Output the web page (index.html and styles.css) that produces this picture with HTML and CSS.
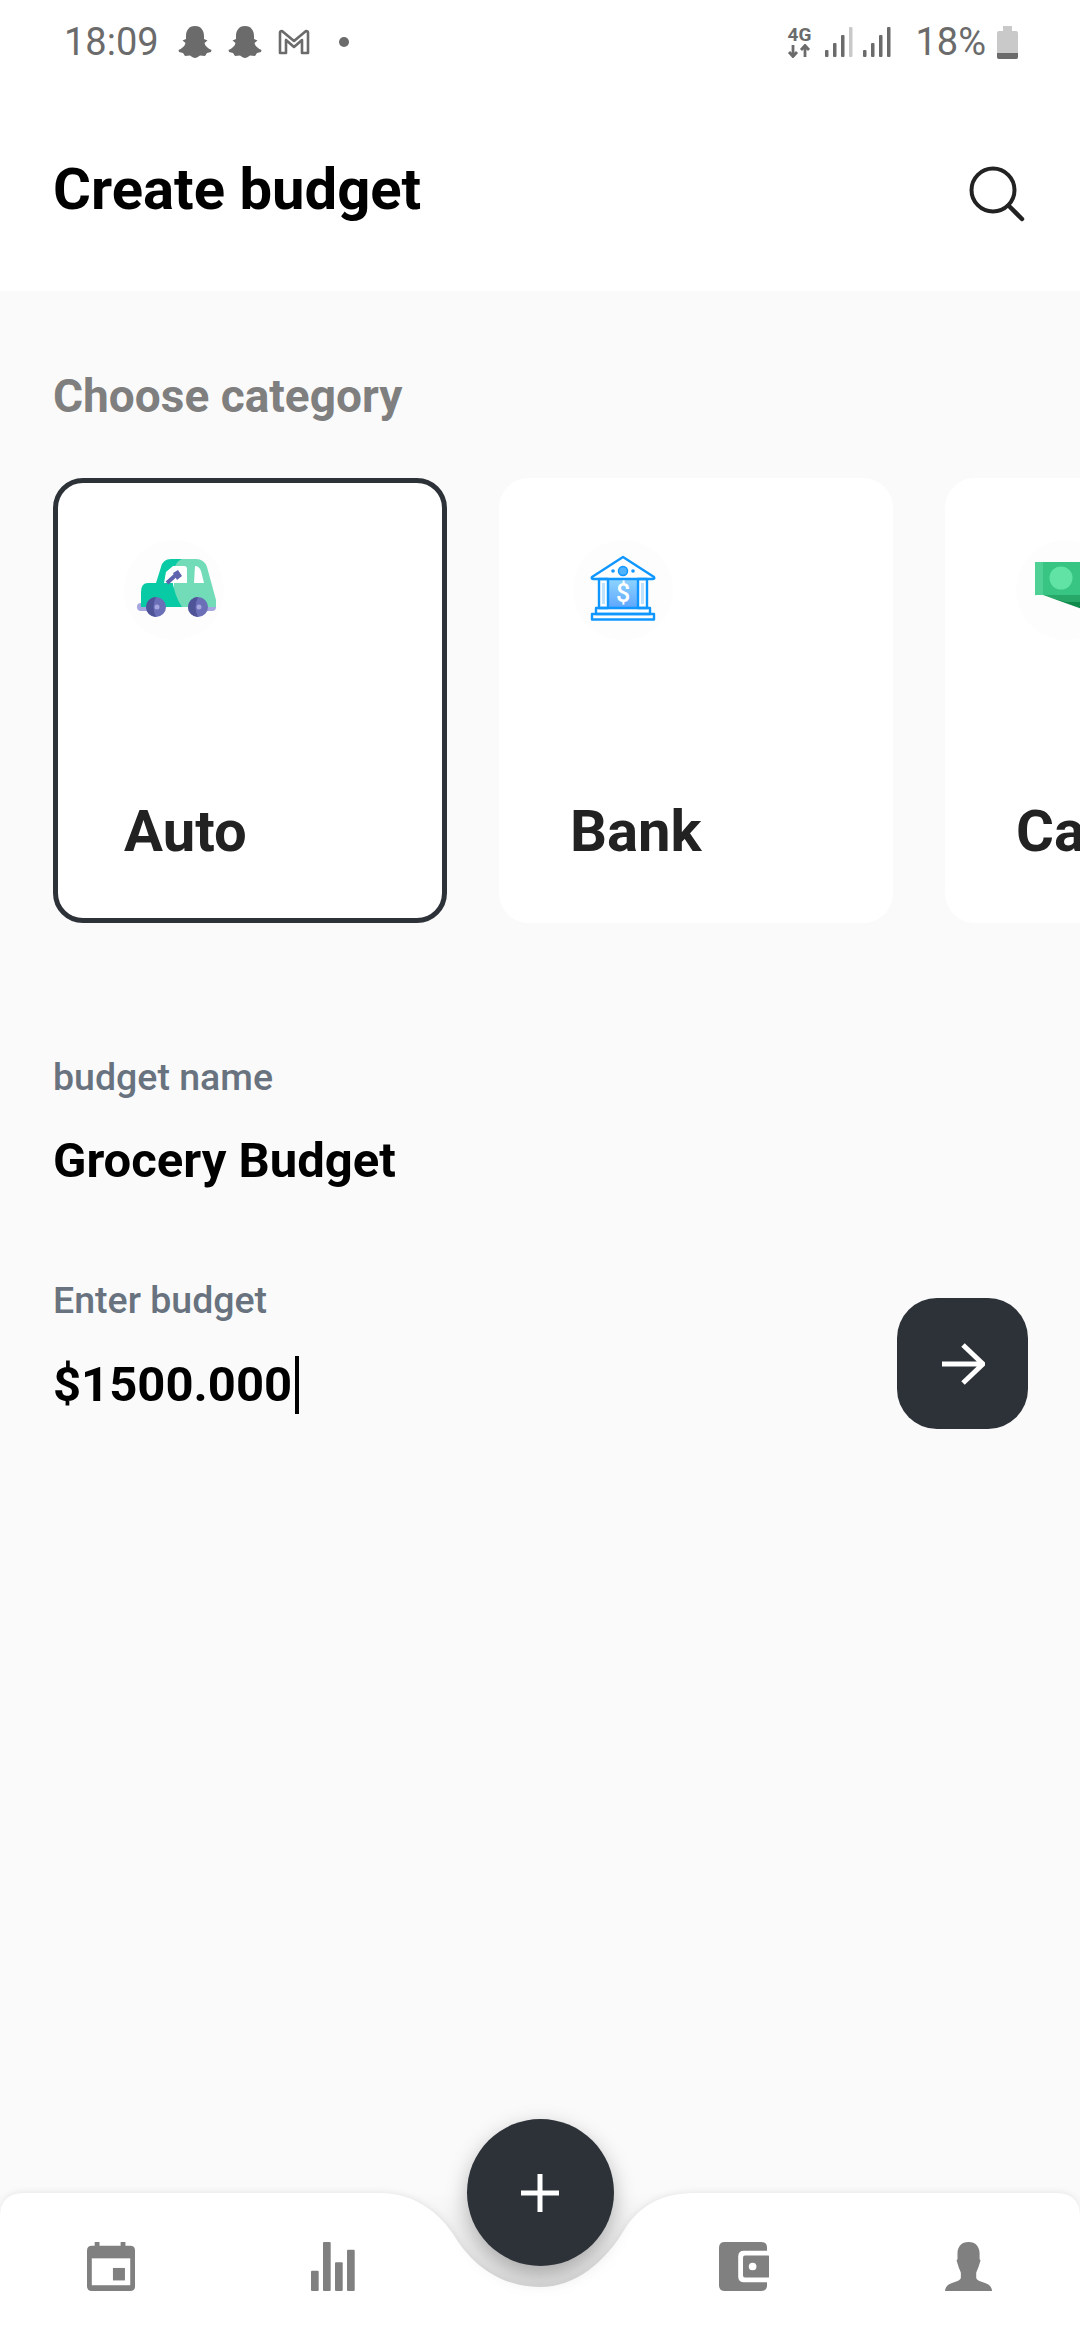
FILE: index.html
```html
<!DOCTYPE html>
<html>
<head>
	<meta charset="utf-8">
	<title>Create budget</title>
	<link rel="stylesheet" href="styles.css">
</head>
<body>
	<div class="page">
		<div class="status">
			<div class="status-left">
				<span class="time">18:09</span>
				<svg class="snap" viewBox="0 0 34 34"><path d="M17 1C10.500 1 8 6 8 11L8 14 4.500 15.500 7.500 18C7 21 4 23.500 0.500 25L1 27 5 28 7 31 12 30.500C14 32 15.500 33 17 33S20 32 22 30.500L27 31 29 28 33 27 33.500 25C30 23.500 27 21 26.500 18L29.500 15.500 26 14 26 11C26 6 23.500 1 17 1Z"/></svg>
				<svg class="snap" viewBox="0 0 34 34"><path d="M17 1C10.500 1 8 6 8 11L8 14 4.500 15.500 7.500 18C7 21 4 23.500 0.500 25L1 27 5 28 7 31 12 30.500C14 32 15.500 33 17 33S20 32 22 30.500L27 31 29 28 33 27 33.500 25C30 23.500 27 21 26.500 18L29.500 15.500 26 14 26 11C26 6 23.500 1 17 1Z"/></svg>
				<svg class="gmail" viewBox="0 0 32 26"><path d="M2 24V4Q2 2 4 2L16 12 28 2Q30 2 30 4V24H24V11L16 18 8 11V24Z" fill="none" stroke="#6b6b6b" stroke-width="2.600" stroke-linejoin="round"/></svg>
				<span class="dot"></span>
			</div>
			<div class="status-right">
				<div class="net">
					<span class="net-label">4G</span>
					<svg class="net-arrows" viewBox="0 0 24 14"><path d="M6 1V12M2 8L6 12.500 10 8M18 13V2M14 6L18 1.500 22 6" fill="none" stroke="#6b6b6b" stroke-width="2.800"/></svg>
				</div>
				<svg class="signal" viewBox="0 0 28 30"><rect x="0" y="23" width="3.500" height="7" rx="1"/><rect x="8" y="16" width="3.500" height="14" rx="1"/><rect x="16" y="8" width="3.500" height="22" rx="1"/><rect class="off" x="24" y="0" width="3.500" height="30" rx="1"/></svg>
				<svg class="signal" viewBox="0 0 28 30"><rect x="0" y="23" width="3.500" height="7" rx="1"/><rect x="8" y="16" width="3.500" height="14" rx="1"/><rect x="16" y="8" width="3.500" height="22" rx="1"/><rect x="24" y="0" width="3.500" height="30" rx="1"/></svg>
				<span class="percent">18%</span>
				<svg class="battery" viewBox="0 0 21 33"><path d="M6 0H15V5H19Q21 5 21 7V31Q21 33 19 33H2Q0 33 0 31V7Q0 5 2 5H6Z" fill="#c9c9c9"/><path d="M0 27H21V31Q21 33 19 33H2Q0 33 0 31Z" fill="#6b6b6b"/></svg>
			</div>
		</div>

		<div class="header">
			<h1>Create budget</h1>
			<svg class="search" viewBox="0 0 56 56"><circle cx="24" cy="24" r="21.500" fill="none" stroke="#222" stroke-width="4"/><path d="M40 40L53 53" stroke="#222" stroke-width="4.500" stroke-linecap="round"/></svg>
		</div>

		<div class="main">
			<h2>Choose category</h2>
			<div class="cards">
				<div class="card active">
					<div class="pic">
						<svg viewBox="0 0 100 100">
							<rect x="13" y="63" width="12" height="8" rx="4" fill="#a5a6e0"/>
							<rect x="80" y="63" width="12" height="8" rx="4" fill="#a5a6e0"/>
							<path d="M50 19H72Q80 19 83 27L92 60V67H50Z" fill="#72dcb8"/>
							<path d="M58 19Q50 22 48 38Q50 55 58 67H17V52Q17 43 24 43H32L37 27Q39 19 47 19Z" fill="#08cba6"/>
							<path d="M49 26H60Q63 26 63 29V43H40L42 32Z" fill="#fff"/>
							<path d="M71 26Q75 26 77 31L80 43H70Z" fill="#fff"/>
							<path d="M43 43L54 33" stroke="#5f63ae" stroke-width="4"/>
							<path d="M49 33L54 30 58 36 53 40Z" fill="#5f63ae"/>
							<circle cx="32" cy="67" r="10" fill="#6a6fb8"/>
							<path d="M32 57A10 10 0 0 0 32 77Q27 67 32 57Z" fill="#4f5499"/>
							<circle cx="33" cy="67" r="2.500" fill="#a5a6e0"/>
							<circle cx="74" cy="67" r="10" fill="#6a6fb8"/>
							<path d="M74 57A10 10 0 0 0 74 77Q69 67 74 57Z" fill="#4f5499"/>
							<circle cx="75" cy="67" r="2.500" fill="#a5a6e0"/>
						</svg>
					</div>
					<span class="card-name">Auto</span>
				</div>
				<div class="card">
					<div class="pic bank">
						<svg viewBox="0 0 100 100">
							<defs>
								<linearGradient id="bankfill" x1="0" y1="0" x2="0" y2="1"><stop offset="0" stop-color="#8ed4ff"/><stop offset="1" stop-color="#5ea6ff"/></linearGradient>
							</defs>
							<rect x="35" y="39" width="30" height="29" fill="url(#bankfill)"/>
							<g fill="none" stroke="#0f97ff" stroke-width="2.400" stroke-linejoin="round">
								<path d="M50 17L81 37Q82 39 80 39H20Q18 39 19 37Z"/>
								<rect x="26" y="39" width="9" height="29"/>
								<rect x="65" y="39" width="9" height="29"/>
								<path d="M30.500 43V64M69.500 43V64" stroke="#bfe3ff" stroke-width="3"/>
								<rect x="23" y="68" width="54" height="6"/>
								<rect x="19" y="74" width="62" height="5.500"/>
							</g>
							<circle cx="50" cy="31" r="4.500" fill="#4fb2ff" stroke="#0f97ff" stroke-width="1.500"/>
							<circle cx="40" cy="31" r="1.800" fill="#0f97ff"/>
							<circle cx="60" cy="31" r="1.800" fill="#0f97ff"/>
							<text class="bank-sign" x="50" y="62" text-anchor="middle">$</text>
						</svg>
					</div>
					<span class="card-name">Bank</span>
				</div>
				<div class="card">
					<div class="pic">
						<svg viewBox="0 0 100 100">
							<path d="M19 22H100V72L65 72 19 55Z" fill="#38c584"/>
							<rect x="19" y="22" width="8" height="33" fill="#4fd195"/>
							<circle cx="45" cy="38" r="11.500" fill="#62e3a6"/>
							<path d="M27 55H100V63H50Z" fill="#27a868"/>
							<path d="M27 56L50 62H100V80H88Z" fill="#0f8a4b"/>
							<path d="M19 55L27 55 100 81V100H90Z" fill="#fdfdfd"/>
						</svg>
					</div>
					<span class="card-name">Cash</span>
				</div>
			</div>

			<div class="field">
				<span class="field-label">budget name</span>
				<span class="field-value">Grocery Budget</span>
			</div>

			<div class="field-row">
				<div class="field">
					<span class="field-label">Enter budget</span>
					<span class="field-value">$1500.000<i class="caret"></i></span>
				</div>
				<div class="next">
					<svg viewBox="0 0 44 42"><path d="M1 21H41M22 2L42 21 22 40" fill="none" stroke="#fff" stroke-width="5"/></svg>
				</div>
			</div>
		</div>

		<div class="nav">
			<svg class="nav-bg" viewBox="0 0 1080 147">
				<defs>
					<linearGradient id="notch" x1="0" y1="0" x2="0" y2="1"><stop offset="0" stop-color="#fafafa"/><stop offset="1" stop-color="#dfdfdf"/></linearGradient>
				</defs>
				<rect x="380" y="0" width="316" height="95" fill="url(#notch)"/>
				<path class="nav-shape" d="M0 24Q0 0 24 0H379C415 0 440 20 455 44C475 76 505 94 540 94C575 94 605 70 626 34C640 14 660 0 695 0H1056Q1080 0 1080 24V147H0Z" fill="#fff"/>
			</svg>
			<div class="nav-item">
				<svg class="nav-icon" viewBox="0 0 50 51"><path d="M8 0H13V4H35V0H40V4H45Q50 4 50 9V46Q50 51 45 51H5Q0 51 0 46V9Q0 4 5 4H8Z"/><rect x="5" y="17" width="40" height="28" fill="#fff"/><rect x="27" y="27" width="12.500" height="13"/></svg>
			</div>
			<div class="nav-item">
				<svg class="nav-icon" viewBox="0 0 46 51"><rect x="0" y="30" width="8" height="21" rx="1"/><rect x="12.500" y="0" width="8" height="51" rx="1"/><rect x="25" y="21" width="8" height="30" rx="1"/><rect x="37.500" y="8" width="8" height="43" rx="1"/></svg>
			</div>
			<div class="nav-gap"></div>
			<div class="nav-item wallet">
				<svg class="nav-icon" viewBox="0 0 53 51"><path d="M6 0H44Q50 0 50 6V45Q50 51 44 51H6Q0 51 0 45V6Q0 0 6 0Z"/><path d="M26 9H53V42H26Q20 42 20 36V15Q20 9 26 9Z" fill="#fff"/><rect x="25" y="14" width="28" height="23" rx="2"/><circle cx="35" cy="25.500" r="4" fill="#fff"/></svg>
			</div>
			<div class="nav-item">
				<svg class="nav-icon" viewBox="0 0 49 51"><path d="M24.500 0C17 0 13 5 13 12V18L12 19 13.500 24C14.500 28 16 30 16.500 32V37C16.500 40 12 41 8 42.500C3 44 0.500 46.500 0 51H49C48.500 46.500 46 44 41 42.500C37 41 32.500 40 32.500 37V32C33 30 34.500 28 35.500 24L37 19 36 18V12C36 5 32 0 24.500 0Z"/></svg>
			</div>
			<div class="fab">
				<svg viewBox="0 0 40 40"><path d="M20 1V39M1 20H39" stroke="#fff" stroke-width="5"/></svg>
			</div>
		</div>
	</div>
</body>
</html>
```

FILE: styles.css
```css
*{
	box-sizing: border-box;
}
html,body{
	margin: 0;
	padding: 0;
}
body{
	font-family: Roboto, "Liberation Sans", sans-serif;
	background: #fff;
}
svg{
	display: block;
}
.page{
	display: flex;
	flex-direction: column;
	width: 1080px;
	height: 2340px;
	overflow: hidden;
}

/* status bar */
.status{
	display: flex;
	justify-content: space-between;
	align-items: center;
	height: 84px;
	padding: 0 62px 0 64px;
	color: #6b6b6b;
}
.status-left,.status-right{
	display: flex;
	align-items: center;
}
.time{
	font-size: 38px;
	width: 114px;
}
.snap{
	width: 34px;
	height: 34px;
	margin-right: 16px;
	fill: #6b6b6b;
}
.gmail{
	width: 32px;
	height: 26px;
}
.dot{
	width: 10px;
	height: 10px;
	margin-left: 29px;
	border-radius: 50%;
	background: #6b6b6b;
}
.net{
	display: flex;
	flex-direction: column;
	align-items: center;
	width: 24px;
	margin-right: 14px;
}
.net-label{
	font-size: 19px;
	font-weight: 700;
	line-height: 18px;
}
.net-arrows{
	width: 24px;
	height: 14px;
}
.signal{
	width: 28px;
	height: 30px;
	margin-right: 10px;
	fill: #6b6b6b;
}
.signal .off{
	fill: #c9c9c9;
}
.percent{
	font-size: 38px;
	margin-left: 14px;
	margin-right: 11px;
}
.battery{
	width: 21px;
	height: 33px;
}

/* header */
.header{
	display: flex;
	justify-content: space-between;
	align-items: center;
	height: 207px;
	padding: 2px 55px 0 53px;
}
h1{
	margin: 0;
	font-size: 58px;
	font-weight: 700;
	color: #000;
}
.search{
	width: 56px;
	height: 56px;
	margin-top: 11px;
}

/* content */
.main{
	flex: 1;
	padding: 79px 0 0 53px;
	background: #fafafa;
}
h2{
	margin: 0;
	font-size: 46px;
	line-height: 52px;
	font-weight: 700;
	color: #7f7f7f;
}
.cards{
	display: flex;
	gap: 52px;
	margin: 56px 0 134px;
}
.card{
	display: flex;
	flex-direction: column;
	justify-content: space-between;
	flex-shrink: 0;
	width: 394px;
	height: 445px;
	padding: 57px 0 54px 66px;
	border: 5px solid transparent;
	border-radius: 30px;
	background: #fff;
}
.card.active{
	border-color: #2d3239;
}
.pic{
	width: 100px;
	height: 100px;
	border-radius: 50%;
	background: #fdfdfd;
}
.pic.bank{
	margin-left: 3px;
}
.card-name{
	font-size: 58px;
	line-height: 66px;
	font-weight: 700;
	color: #222;
}
.bank-sign{
	font-size: 25px;
	font-weight: 500;
	fill: #fff;
}
.field{
	display: flex;
	flex-direction: column;
	gap: 36px;
}
.field-label{
	font-size: 37.500px;
	line-height: 40px;
	font-weight: 500;
	color: #68737f;
}
.field-value{
	display: flex;
	align-items: center;
	font-size: 49px;
	line-height: 56px;
	font-weight: 700;
	color: #000;
}
.caret{
	width: 4px;
	height: 58px;
	margin-left: 3px;
	background: #000;
}
.field-row{
	display: flex;
	justify-content: space-between;
	align-items: flex-start;
	margin-top: 91px;
	padding-right: 52px;
}
.next{
	display: flex;
	align-items: center;
	justify-content: center;
	width: 131px;
	height: 131px;
	margin-top: 18px;
	border-radius: 40px;
	background: #2d3239;
}
.next svg{
	width: 44px;
	height: 42px;
}

/* bottom bar */
.nav{
	position: relative;
	display: flex;
	align-items: flex-start;
	height: 147px;
	padding-top: 49px;
	background: #fafafa;
}
.nav-bg{
	position: absolute;
	left: 0;
	top: 0;
	width: 1080px;
	height: 147px;
	overflow: visible;
}
.nav-shape{
	filter: drop-shadow(0 -1px 3px rgba(0,0,0,0.08));
}
.nav-item{
	position: relative;
	display: flex;
	justify-content: center;
	width: 222px;
}
.nav-item.wallet{
	margin-left: -3px;
	margin-right: 3px;
}
.nav-gap{
	flex: 1;
}
.nav-icon{
	height: 49px;
	fill: #808080;
}
.fab{
	position: absolute;
	left: 466.500px;
	top: -74px;
	display: flex;
	align-items: center;
	justify-content: center;
	width: 147px;
	height: 147px;
	border-radius: 50%;
	background: #2d3239;
	box-shadow: 0 8px 22px rgba(0,0,0,0.28);
}
.fab svg{
	width: 40px;
	height: 40px;
}
```
